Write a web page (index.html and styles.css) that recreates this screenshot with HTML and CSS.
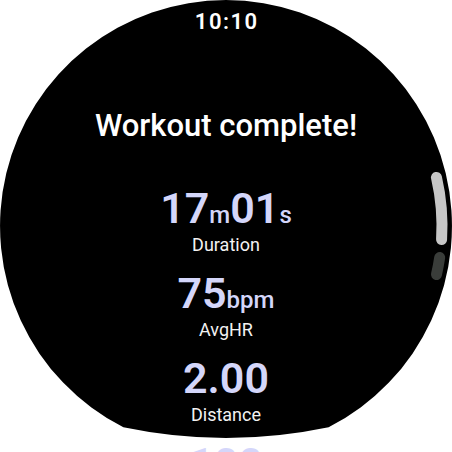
FILE: index.html
```html
<!DOCTYPE html>
<html lang="en">
<head>
<meta charset="utf-8">
<title>Workout complete</title>
<link rel="stylesheet" href="styles.css">
</head>
<body>
<div class="watch">
  <svg class="face" width="452" height="452" viewBox="0 0 452 452" aria-hidden="true">
    <path d="M226 0 A226 226 0 0 1 328.6 427.35 A500 500 0 0 1 123.4 427.35 A226 226 0 0 1 226 0 Z" fill="#000"/>
  </svg>
  <div class="content">
    <div class="time">10:10</div>
    <h1 class="title">Workout complete!</h1>
    <ul class="stats">
      <li class="stat">
        <div class="value">17<span class="unit">m</span>01<span class="unit">s</span></div>
        <div class="label">Duration</div>
      </li>
      <li class="stat">
        <div class="value">75<span class="unit">bpm</span></div>
        <div class="label">AvgHR</div>
      </li>
      <li class="stat">
        <div class="value">2.00</div>
        <div class="label">Distance</div>
      </li>
      <li class="stat">
        <div class="value">100</div>
      </li>
    </ul>
  </div>
  <svg class="indicator" width="452" height="452" viewBox="0 0 452 452" aria-hidden="true">
    <path d="M436.47 177.40 A216 216 0 0 1 441.57 239.56" class="thumb"/>
    <path d="M439.68 257.55 A216 216 0 0 1 436.47 274.60" class="track"/>
  </svg>
</div>
</body>
</html>
```

FILE: styles.css
```css
body {
  margin: 0;
  background: #ffffff;
}

.watch {
  position: relative;
  width: 452px;
  height: 452px;
  overflow: hidden;
  font-family: Roboto, "Noto Sans", sans-serif;
}

.face {
  position: absolute;
  left: 0;
  top: 0;
}

.indicator {
  position: absolute;
  left: 0;
  top: 0;
  pointer-events: none;
}

.thumb {
  fill: none;
  stroke: #c6c6c6;
  stroke-width: 11;
  stroke-linecap: round;
}

.track {
  fill: none;
  stroke: #3a3d3a;
  stroke-width: 11;
  stroke-linecap: round;
}

.content {
  position: relative;
  display: flex;
  flex-direction: column;
  align-items: center;
  padding-top: 10px;
}

.time {
  font-size: 22px;
  line-height: 24px;
  font-weight: 600;
  letter-spacing: 1.5px;
  padding-left: 1.5px;
  color: #ffffff;
}

.title {
  margin: 75px 0 0;
  font-size: 31px;
  line-height: 34px;
  font-weight: 500;
  color: #ffffff;
}

.stats {
  list-style: none;
  margin: 43px 0 0;
  padding: 0;
  display: flex;
  flex-direction: column;
  align-items: center;
  gap: 15px;
}

.stat {
  display: flex;
  flex-direction: column;
  align-items: center;
  gap: 4px;
}

.value {
  font-size: 43px;
  line-height: 44px;
  font-weight: 600;
  color: #d4d6fa;
}

.unit {
  font-size: 24px;
  line-height: 1;
  font-weight: 500;
}

.label {
  font-size: 18px;
  line-height: 22px;
  color: #f2f2f2;
}
```
